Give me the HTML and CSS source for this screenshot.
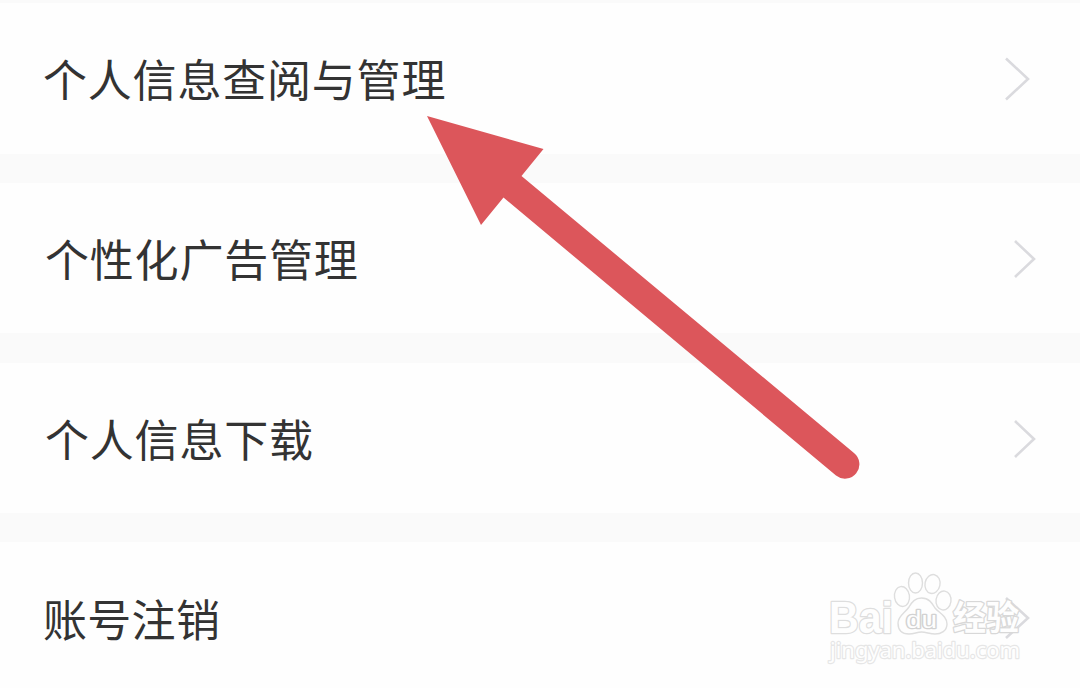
FILE: index.html
```html
<!DOCTYPE html>
<html lang="zh-CN">
<head>
<meta charset="utf-8">
<title>个人信息管理</title>
<link rel="stylesheet" href="styles.css">
</head>
<body>
<main class="settings">
  <div class="row row-first"><span class="label">个人信息查阅与管理</span><svg class="chevron" width="26" height="46" viewBox="0 0 26 46"><path d="M2 2.5L24 23L2 43.500"/></svg></div>
  <div class="row row-ads"><span class="label">个性化广告管理</span><svg class="chevron chevron-small" width="24" height="42" viewBox="0 0 24 42"><path d="M3 4L22 22L3 40"/></svg></div>
  <div class="row row-download"><span class="label">个人信息下载</span><svg class="chevron chevron-small" width="24" height="42" viewBox="0 0 24 42"><path d="M3 4L22 22L3 40"/></svg></div>
  <div class="row row-last"><span class="label">账号注销</span><svg class="chevron" width="26" height="46" viewBox="0 0 26 46"><path d="M2 3L24 23L2 43"/></svg></div>

  <svg class="arrow" width="440" height="380" viewBox="0 0 440 380">
    <path d="M7 16L123.500 49L101.500 76L434 353A14.300 14.300 0 0 1 416 375.500L83.500 97.500L61 125Z"/>
  </svg>

  <svg class="watermark" width="210" height="108" viewBox="820 566 210 108">
    <g class="mark">
      <text class="latin" x="829" y="632.500" textLength="64" lengthAdjust="spacingAndGlyphs">Bai</text>
      <ellipse cx="902" cy="596.500" rx="7.500" ry="10" transform="rotate(-8 902 596.500)"/>
      <ellipse cx="915.500" cy="583" rx="7" ry="10"/>
      <ellipse cx="932.500" cy="584" rx="7.500" ry="9.500" transform="rotate(12 932.500 584)"/>
      <ellipse cx="943.500" cy="600.500" rx="7.500" ry="9.500" transform="rotate(8 943.500 600.500)"/>
      <path d="M921.500 598C929 598 932 603 935 608C939 613 947 616 947 624C947 631 941 634 935 634C930 634 926 632 921.500 632C917 632 914 634 909 634C902 634 898 630 898 623C898 616 905 613 909 607C912 602 915 598 921.500 598Z"/>
      <text class="du" x="906" y="628" textLength="31" lengthAdjust="spacingAndGlyphs">du</text>
      <text class="cjk" x="953" y="630" textLength="66" lengthAdjust="spacingAndGlyphs">经验</text>
      <text class="domain" x="830" y="658" textLength="190" lengthAdjust="spacingAndGlyphs">jingyan.baidu.com</text>
    </g>
  </svg>
</main>
</body>
</html>
```
FILE: styles.css
```css
* { box-sizing: border-box; }
body { margin: 0; background: #fafafa; }
.settings {
  position: relative;
  display: grid;
  grid-template-rows: 151px 150px 151px 152px;
  row-gap: 29px;
  height: 688px;
  padding-top: 3px;
  overflow: hidden;
  font-family: "Noto Sans CJK SC", sans-serif;
}
.row {
  display: flex;
  align-items: center;
  justify-content: space-between;
  background: #fefefe;
  padding: 0 50px 0 43px;
}
.row-ads, .row-download { padding: 0 44px 0 45px; }
.row-download { margin-top: 1px; }
.label {
  color: #333;
  font-size: 44px;
  line-height: 64px;
  letter-spacing: 0.8px;
  white-space: nowrap;
}
.row-first .label { padding-bottom: 2px; }
.row-last .label { letter-spacing: 0.3px; }
.chevron {
  flex: none;
  fill: none;
  stroke: #dadade;
  stroke-width: 2.6;
}
.arrow {
  position: absolute;
  left: 420px;
  top: 100px;
  overflow: visible;
  fill: #dc565b;
}
.watermark {
  position: absolute;
  left: 820px;
  top: 566px;
}
.mark {
  fill: #fefefe;
  stroke: #dedede;
  stroke-width: 1.4;
}
.mark text {
  paint-order: stroke;
  stroke-width: 2.6;
  stroke-linejoin: round;
}
.mark .latin { font: bold 44px "Liberation Sans", sans-serif; }
.mark .du { font: 23px "Liberation Sans", sans-serif; stroke: #d2d2d2; }
.mark .cjk { font: bold 34px "Noto Sans CJK SC", sans-serif; stroke: #d8d8d8; }
.mark .domain { font: 22.5px "Noto Sans", sans-serif; stroke: #e6e6e6; stroke-width: 2.4; }
```
